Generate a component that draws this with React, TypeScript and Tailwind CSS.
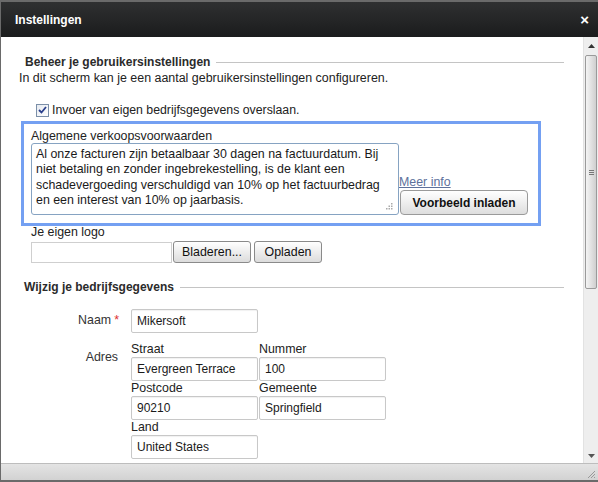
import React from 'react';

const font = { fontFamily: '"Liberation Sans", Arial, sans-serif' };

function Legend({ title }: { title: string }) {
  return (
    <div className="flex items-center">
      <span className="text-[12px] leading-[14px] font-bold text-[#2b2b2b] whitespace-nowrap">{title}</span>
      <div className="flex-1 ml-[6px] h-px bg-[#c4c4c4]" />
    </div>
  );
}

function Field({ value, wide = 127 }: { value?: string; wide?: number }) {
  return (
    <div
      className="h-[24px] border border-[#c8c8c8] rounded-[2px] bg-white px-[5px] flex items-center text-[12px] text-[#1a1a1a] shadow-[inset_0_1px_1px_rgba(0,0,0,0.06)]"
      style={{ width: wide }}
    >
      {value}
    </div>
  );
}

function Button({ children, className = '' }: { children: React.ReactNode; className?: string }) {
  return (
    <button
      className={
        'h-[22px] px-2 border border-[#8a8a8a] rounded-[3px] bg-gradient-to-b from-white to-[#dcdcdc] text-[12.4px] text-[#111] ' +
        className
      }
    >
      {children}
    </button>
  );
}

function Scrollbar() {
  return (
    <div className="w-[15px] flex flex-col bg-[#eeeeee] border-l border-[#e2e2e2]">
      <div className="h-[18px] flex items-center justify-center">
        <svg width="7" height="4" viewBox="0 0 7 4"><path d="M0 4 L3.5 0 L7 4 Z" fill="#333" /></svg>
      </div>
      <div className="mx-[1px] h-[234px] border border-[#9a9a9a] rounded-[2px] bg-gradient-to-r from-[#f4f4f4] via-[#e2e2e2] to-[#cfcfcf] flex items-center justify-center">
        <div className="flex flex-col gap-[1px]">
          <div className="w-[5px] h-px bg-[#777]" />
          <div className="w-[5px] h-px bg-[#777]" />
          <div className="w-[5px] h-px bg-[#777]" />
        </div>
      </div>
      <div className="flex-1" />
      <div className="h-[14px] flex items-center justify-center">
        <svg width="7" height="4" viewBox="0 0 7 4"><path d="M0 0 L3.5 4 L7 0 Z" fill="#555" /></svg>
      </div>
    </div>
  );
}

export default function App() {
  return (
    <div style={font} className="w-[598px] h-[482px] flex flex-col border-l border-t-2 border-b-2 border-[#6a6a6a] bg-white overflow-hidden">
      {/* Title bar */}
      <div className="h-[35px] shrink-0 flex items-center justify-between pl-[14px] pr-[9px] bg-gradient-to-b from-[#2f3031] to-[#1b1c1d]">
        <span className="text-[12px] font-bold text-white">Instellingen</span>
        <span className="text-[15px] font-bold text-white leading-none">×</span>
      </div>

      <div className="flex flex-1 min-h-0">
        <div className="flex-1 overflow-hidden pl-[18px] pr-[19px] pt-[18px] text-[#222]">
          <div className="pl-[6px]">
            <Legend title="Beheer je gebruikersinstellingen" />
          </div>
          <p className="mt-[2px] text-[12.45px] leading-[15px] whitespace-nowrap">
            In dit scherm kan je een aantal gebruikersinstellingen configureren.
          </p>

          <label className="mt-[17px] ml-[17px] flex items-center gap-[3px] text-[12.3px] leading-[14px]">
            <span className="w-[13px] h-[13px] border border-[#7b8fa8] bg-gradient-to-br from-[#e6eaf0] to-white flex items-center justify-center">
              <svg width="9" height="8" viewBox="0 0 9 8"><path d="M1 4 L3.5 6.5 L8 1" stroke="#2a3f8c" strokeWidth="1.8" fill="none" /></svg>
            </span>
            Invoer van eigen bedrijfsgegevens overslaan.
          </label>

          <div className="mt-[4px] ml-[2px] w-[520px] border-[3px] border-[#74a0f2] pl-[7px] pt-[5px] pb-[8px]">
            <div className="text-[12.4px] leading-[14px]">Algemene verkoopsvoorwaarden</div>
            <div className="flex items-end">
              <div className="relative w-[368px] h-[72px] border border-[#86a3c2] rounded-[3px] pl-[4px] pt-[3px] text-[12.4px] leading-[15.3px] text-[#1a1a1a] whitespace-nowrap">
                Al onze facturen zijn betaalbaar 30 dagen na factuurdatum. Bij
                <br />
                niet betaling en zonder ingebrekestelling, is de klant een
                <br />
                schadevergoeding verschuldigd van 10% op het factuurbedrag
                <br />
                en een interest van 10% op jaarbasis.
                <svg className="absolute right-[5px] bottom-[4px]" width="7" height="7" viewBox="0 0 7 7">
                  <rect x="5" y="0" width="1.5" height="1.5" fill="#aaa" />
                  <rect x="2.5" y="2.5" width="1.5" height="1.5" fill="#aaa" />
                  <rect x="5" y="2.5" width="1.5" height="1.5" fill="#aaa" />
                  <rect x="0" y="5" width="1.5" height="1.5" fill="#aaa" />
                  <rect x="2.5" y="5" width="1.5" height="1.5" fill="#aaa" />
                  <rect x="5" y="5" width="1.5" height="1.5" fill="#aaa" />
                </svg>
              </div>
              <div className="flex flex-col items-start">
                <a className="text-[12.4px] leading-[13px] text-[#5d719c] underline">Meer info</a>
                <button className="mt-[1px] ml-[1px] w-[128px] h-[25px] border border-[#9a9a9a] rounded-[4px] bg-gradient-to-b from-white to-[#dedede] text-[12px] font-bold text-[#111]">
                  Voorbeeld inladen
                </button>
              </div>
            </div>
          </div>

          <div className="ml-[12px] mt-[-1px] text-[12.4px] leading-[14px]">Je eigen logo</div>
          <div className="ml-[12px] mt-[2px] flex items-center">
            <div className="w-[141px] h-[21px] border border-[#cfcfcf] bg-white" />
            <Button className="ml-[1px] w-[78px] h-[21px]">Bladeren...</Button>
            <Button className="ml-[3px] w-[68px] h-[21px]">Opladen</Button>
          </div>

          <div className="mt-[17px] pl-[5px]">
            <Legend title="Wijzig je bedrijfsgegevens" />
          </div>

          <div className="mt-[15px] grid grid-cols-[100px_auto] gap-x-[12px]">
            <div className="h-[23px] flex items-center justify-end text-[12.4px] text-[#333]">
              Naam<span className="ml-[3px] text-[#d33]">*</span>
            </div>
            <Field value="Mikersoft" />

            <div className="mt-[15px] text-right pr-[1px] text-[12.4px] text-[#333]">Adres</div>
            <div className="mt-[9px] grid grid-cols-[128px_128px]">
              <div className="text-[12.4px] leading-[15px]">Straat</div>
              <div className="text-[12.4px] leading-[15px]">Nummer</div>
              <Field value="Evergreen Terrace" />
              <Field value="100" />
              <div className="text-[12.4px] leading-[15px]">Postcode</div>
              <div className="text-[12.4px] leading-[15px]">Gemeente</div>
              <Field value="90210" />
              <Field value="Springfield" />
              <div className="text-[12.4px] leading-[15px]">Land</div>
              <div />
              <Field value="United States" />
            </div>
          </div>
        </div>
        <Scrollbar />
      </div>

      {/* Footer */}
      <div className="h-[17px] shrink-0 border-t border-[#bdbdbd] bg-gradient-to-b from-[#e4e4e4] to-[#d2d2d2] flex justify-end items-end pr-[2px] pb-[1px]">
        <svg width="10" height="10" viewBox="0 0 10 10">
          <path d="M9 2 L2 9 M9 5 L5 9 M9 8 L8 9" stroke="#999" strokeWidth="1" />
        </svg>
      </div>
    </div>
  );
}
